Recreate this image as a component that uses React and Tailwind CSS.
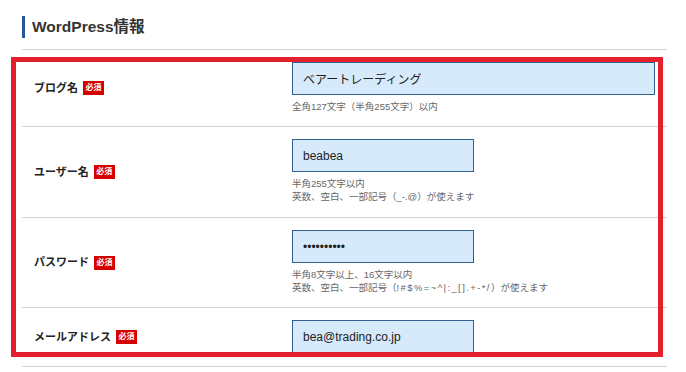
import React from "react";

const FONT = { fontFamily: '"Liberation Sans", Arial, "Noto Sans CJK JP", sans-serif' };

function Badge() {
  return (
    <span className="inline-flex items-center justify-center w-[21px] h-[14px] bg-[#d50000] text-white text-[8px] font-bold leading-none ml-[5px]">
      必須
    </span>
  );
}

function Row({ label, h, inputW, value, hints }) {
  return (
    <div className={`flex border-b border-[#d4d4d4] box-border ${h}`}>
      <div className="w-[270px] pl-[12px] flex items-center">
        <span className="text-[11px] font-bold text-[#222] leading-none">{label}</span>
        <Badge />
      </div>
      <div className="pt-[12px]">
        <div
          className={`h-[33px] ${inputW} bg-[#d7eafc] border border-[#2f6090] box-border flex items-center pl-[10px] text-[#222] text-[12px]`}
        >
          {value}
        </div>
        {hints && (
          <div className="mt-[5px] text-[9.5px] leading-[13px] text-[#666]">
            {hints.map((t, i) => (
              <div key={i}>{t}</div>
            ))}
          </div>
        )}
      </div>
    </div>
  );
}

export default function App() {
  return (
    <div className="relative w-[686px] h-[372px] bg-white overflow-hidden" style={FONT}>
      <div className="ml-[22px] w-[645px]">
        <div className="h-[50px] pt-[16px] border-b border-[#d4d4d4] box-border">
          <div className="h-[22px] border-l-[3px] border-[#27589a] pl-[7px] flex items-center text-[15.5px] font-bold text-[#333]">
            WordPress情報
          </div>
        </div>
        <Row
          label="ブログ名"
          h="h-[77px]"
          inputW="w-[363px]"
          value={<span className="text-[12px]" style={{ fontFamily: '"Noto Sans CJK JP", sans-serif' }}>ベアートレーディング</span>}
          hints={["全角127文字（半角255文字）以内"]}
        />
        <Row
          label="ユーザー名"
          h="h-[91px]"
          inputW="w-[182px]"
          value="beabea"
          hints={["半角255文字以内", "英数、空白、一部記号（_-.@）が使えます"]}
        />
        <Row
          label="パスワード"
          h="h-[90px]"
          inputW="w-[182px]"
          value="••••••••••"
          hints={[
            "半角8文字以上、16文字以内",
            <>
              英数、空白、一部記号（<span className="tracking-[1.4px]">!#$%=~^|:_[].+-*/</span>）が使えます
            </>,
          ]}
        />
        <Row
          label="メールアドレス"
          h="h-[59px]"
          inputW="w-[182px]"
          value="bea@trading.co.jp"
        />
      </div>
      <div className="absolute left-[11px] top-[57px] w-[652px] h-[300px] border-[5px] border-[#e3202b] pointer-events-none" />
    </div>
  );
}
